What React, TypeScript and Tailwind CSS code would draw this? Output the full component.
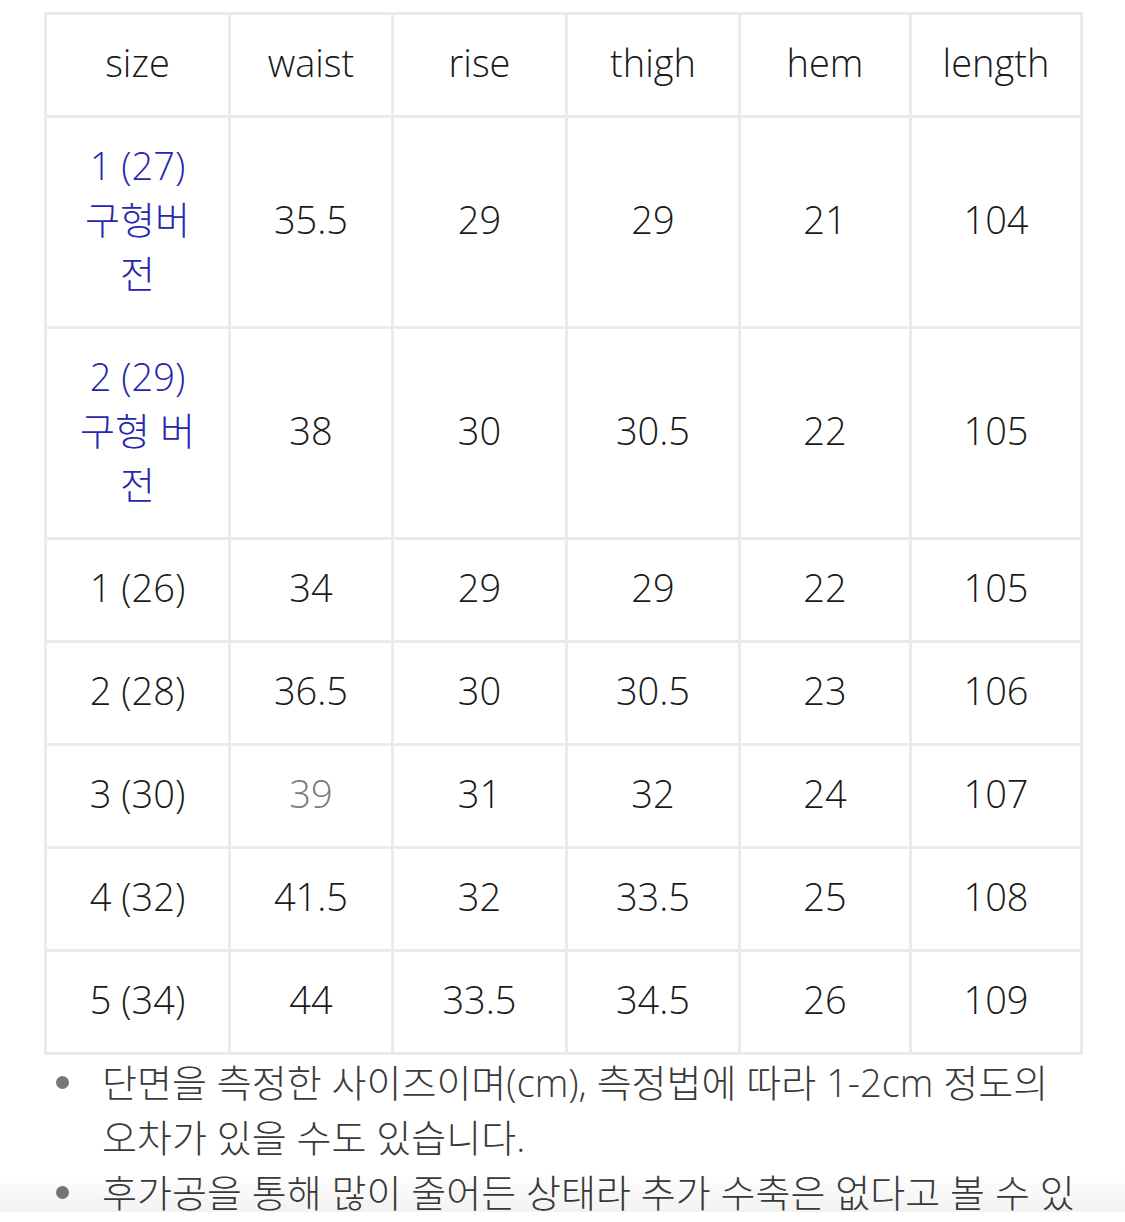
import React from 'react'

const headers = ['size', 'waist', 'rise', 'thigh', 'hem', 'length']
const widths = ['w-[184px]', 'w-[163px]', 'w-[174px]', 'w-[173px]', 'w-[171px]', 'w-[171px]']

type Row = { size: React.ReactNode; blue?: boolean; values: string[]; grayIdx?: number }

const rows: Row[] = [
  {
    size: (
      <>
        <span className="block">1 (27)</span>
        <span className="block">구형버</span>
        <span className="block">전</span>
      </>
    ),
    blue: true,
    values: ['35.5', '29', '29', '21', '104'],
  },
  {
    size: (
      <>
        <span className="block">2 (29)</span>
        <span className="block">구형 버</span>
        <span className="block">전</span>
      </>
    ),
    blue: true,
    values: ['38', '30', '30.5', '22', '105'],
  },
  { size: '1 (26)', values: ['34', '29', '29', '22', '105'] },
  { size: '2 (28)', values: ['36.5', '30', '30.5', '23', '106'] },
  { size: '3 (30)', values: ['39', '31', '32', '24', '107'], grayIdx: 0 },
  { size: '4 (32)', values: ['41.5', '32', '33.5', '25', '108'] },
  { size: '5 (34)', values: ['44', '33.5', '34.5', '26', '109'] },
]

const notes = [
  '단면을 측정한 사이즈이며(cm), 측정법에 따라 1-2cm 정도의 오차가 있을 수도 있습니다.',
  '후가공을 통해 많이 줄어든 상태라 추가 수축은 없다고 볼 수 있습니다.',
]

const App: React.FC = () => {
  return (
    <div
      className="relative h-[1222px] overflow-hidden bg-white text-[#1a1a1a]"
      style={{ fontFamily: '"Open Sans", "Noto Sans CJK KR", sans-serif' }}
    >
      <div className="pt-[12px] pl-[44px]">
        <table className="w-[1036px] table-fixed border-collapse border-[3px] border-[#ebebeb] text-center text-[38px] font-light leading-[54px]">
          <thead>
            <tr>
              {headers.map((h, i) => (
                <th
                  key={h}
                  className={`${widths[i]} border-[3px] border-[#ebebeb] pt-[20px] pb-[26px] font-light`}
                >
                  {h}
                </th>
              ))}
            </tr>
          </thead>
          <tbody>
            {rows.map((row, r) => (
              <tr key={r}>
                <td
                  className={`border-[3px] border-[#ebebeb] px-1 pt-[20px] pb-[26px] ${
                    row.blue ? 'text-[#2727ad]' : ''
                  }`}
                >
                  {row.size}
                </td>
                {row.values.map((v, i) => (
                  <td
                    key={i}
                    className={`border-[3px] border-[#ebebeb] pt-[20px] pb-[26px] ${
                      row.grayIdx === i ? 'text-[#7a7a7a]' : ''
                    }`}
                  >
                    {v}
                  </td>
                ))}
              </tr>
            ))}
          </tbody>
        </table>

        {/* notes */}
        <ul className="w-[1034px] text-[38px] font-light leading-[55px] text-[#3a3a3a]">
          {notes.map((n) => (
            <li key={n} className="flex">
              <span className="flex h-[55px] w-[58px] shrink-0 items-center pl-[12px]">
                <span className="h-[13px] w-[13px] rounded-full bg-[#777777]" />
              </span>
              <span>{n}</span>
            </li>
          ))}
        </ul>
      </div>

      {/* bottom fade */}
      <div className="pointer-events-none absolute bottom-[10px] left-0 right-0 h-[40px] bg-gradient-to-b from-transparent to-black/5" />
      <div className="absolute bottom-0 left-0 right-0 h-[10px] bg-white" />
    </div>
  )
}

export default App
